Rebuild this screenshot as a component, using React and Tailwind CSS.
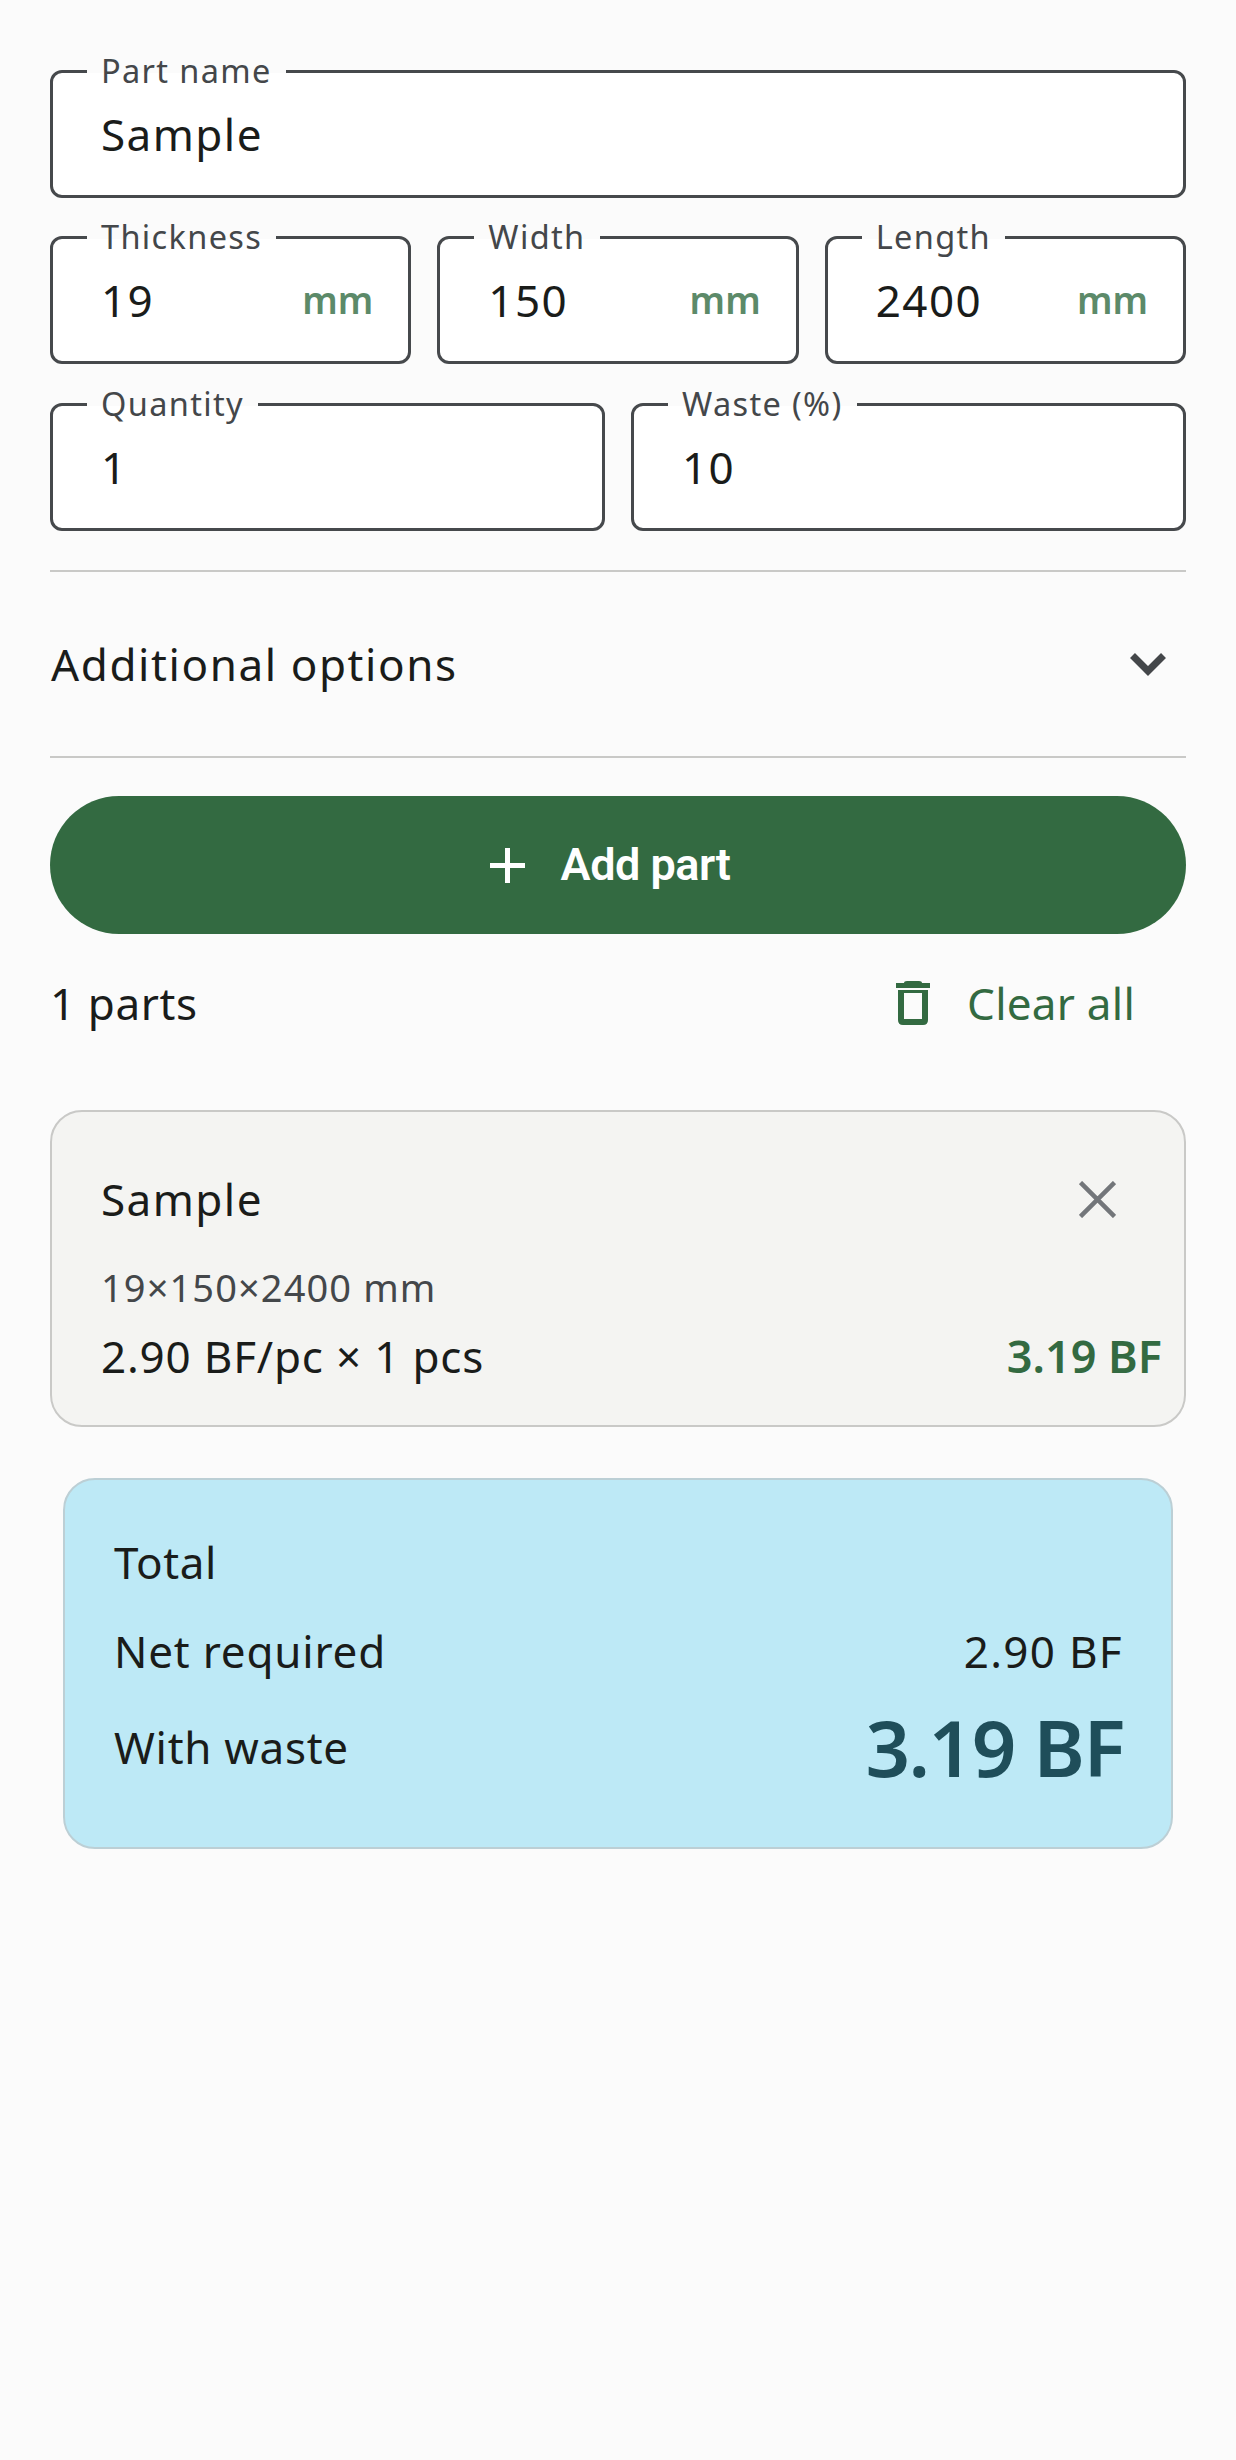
function Field({ label, value, unit, className = "" }) {
  return (
    <div className={`relative h-[128px] rounded-[12px] border-[3px] border-[#46494c] bg-white flex items-center pl-[48px] pr-[35px] ${className}`}>
      <span className="absolute left-[34px] top-[-22px] h-[40px] px-[14px] flex items-center text-[32.5px] leading-[40px] tracking-[1.35px] text-[#44474a] whitespace-nowrap bg-[linear-gradient(#fbfbfb_55%,#ffffff_55%)]">
        {label}
      </span>
      <span className="flex-1 text-[44px] leading-[60px] tracking-[1.45px] text-[#1a1c1a]">{value}</span>
      {unit && <span className="text-[37px] leading-[60px] font-semibold text-[#5c8a69]">{unit}</span>}
    </div>
  );
}

export default function App() {
  return (
    <div className="min-h-[2460px] bg-[#fbfbfb] px-[50px] pt-[70px] font-['Noto_Sans','Open_Sans',sans-serif] text-[#1a1c1a]">
      <Field label="Part name" value="Sample" />
      <div className="mt-[38px] grid grid-cols-3 gap-[26px]">
        <Field label="Thickness" value="19" unit="mm" />
        <Field label="Width" value="150" unit="mm" />
        <Field label="Length" value="2400" unit="mm" />
      </div>
      <div className="mt-[39px] grid grid-cols-2 gap-[26px]">
        <Field label="Quantity" value="1" />
        <Field label="Waste (%)" value="10" />
      </div>

      <div className="mt-[39px] h-[188px] border-y-[2px] border-[#c9c9c7] flex items-center justify-between">
        <span className="ml-px text-[44px] leading-[60px] tracking-[1.6px]">Additional options</span>
        <svg viewBox="0 0 38 24" className="mr-[19px] w-[38px] h-[24px]" fill="none" stroke="#44474a" strokeWidth="7">
          <path d="M3.5 3.5 L19 19 L34.5 3.5" />
        </svg>
      </div>

      <button className="mt-[38px] h-[138px] w-full rounded-full bg-[#336a41] flex items-center justify-center gap-[36px] pr-[16px] text-white">
        <svg viewBox="0 0 35 35" className="w-[35px] h-[35px]" fill="none" stroke="#ffffff" strokeWidth="5">
          <path d="M17.5 0 V35 M0 17.5 H35" />
        </svg>
        <span className="font-['Roboto',sans-serif] font-semibold text-[45px] leading-[60px] tracking-[-0.5px]">Add part</span>
      </button>

      <div className="mt-[39px] h-[60px] flex items-center justify-between">
        <span className="text-[44px] leading-[60px] tracking-[0.6px]">1 parts</span>
        <div className="flex items-center gap-[37px] mr-[51px] text-[#336a41]">
          <svg viewBox="0 0 34 44" className="w-[34px] h-[44px]" fill="#336a41">
            <path d="M8 2 Q8 0 11 0 H23 Q26 0 26 2 H34 V7 H0 V2 Z" />
            <path fillRule="evenodd" d="M2 9 H32 V39 Q32 44 27 44 H7 Q2 44 2 39 Z M8 12 V38 H26 V12 Z" />
          </svg>
          <span className="text-[44px] leading-[60px] tracking-[0.25px]">Clear all</span>
        </div>
      </div>

      <div className="mt-[77px] h-[317px] rounded-[32px] border-[2px] border-[#c9c9c7] bg-[#f4f4f2] pl-[49px] pr-[22px] pt-[57px]">
        <div className="flex items-center justify-between pr-[46px]">
          <span className="text-[44px] leading-[60px] tracking-[1.45px]">Sample</span>
          <svg viewBox="0 0 37 37" className="w-[37px] h-[37px]" fill="none" stroke="#73767a" strokeWidth="4.5">
            <path d="M1.5 1.5 L35.5 35.5 M35.5 1.5 L1.5 35.5" />
          </svg>
        </div>
        <div className="mt-[33px] text-[38px] leading-[50px] tracking-[1.1px] text-[#44474a]">19×150×2400 mm</div>
        <div className="mt-[14px] flex items-center justify-between">
          <span className="text-[44px] leading-[60px] tracking-[0.8px]">2.90 BF/pc × 1 pcs</span>
          <span className="text-[45px] leading-[60px] font-semibold text-[#336a41]">3.19 BF</span>
        </div>
      </div>

      <div className="mx-[13px] mt-[51px] h-[371px] rounded-[32px] border-[2px] border-[#bccfd5] bg-[#bde9f6] px-[49px] pt-[52px]">
        <div className="text-[44px] leading-[60px] tracking-[0.6px]">Total</div>
        <div className="mt-[29px] flex items-center justify-between">
          <span className="text-[44px] leading-[60px] tracking-[0.8px]">Net required</span>
          <span className="mr-[-1px] text-[44px] leading-[60px] tracking-[1.3px]">2.90 BF</span>
        </div>
        <div className="mt-[21px] flex items-center justify-between">
          <span className="text-[44px] leading-[60px] tracking-[0.7px]">With waste</span>
          <span className="mr-[-2px] text-[78px] leading-[90px] font-semibold text-[#1f4e5a] tracking-[-1.5px]">3.19 BF</span>
        </div>
      </div>
    </div>
  );
}
